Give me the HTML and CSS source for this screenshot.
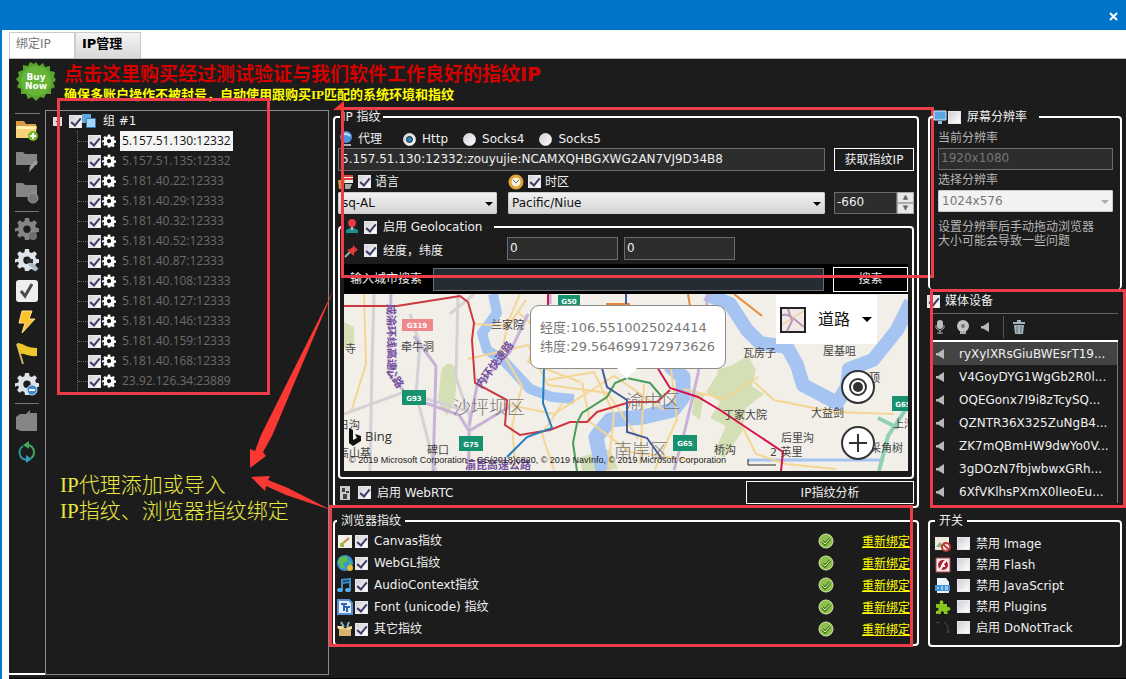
FILE: index.html
```
<!DOCTYPE html>
<html lang="zh-CN">
<head>
    <meta charset="UTF-8">
    <meta name="viewport" content="width=device-width, initial-scale=1.0">
    <title>IP管理</title>
    <link rel="stylesheet" href="styles.css">
</head>
<body>
    <!-- shared icons -->
    <svg class="defs" width="0" height="0">
        <symbol id="gear" viewBox="0 0 24 24">
            <path fill="currentColor" fill-rule="evenodd" d="M10 1h4l.6 3.2 2.2.9L19.500 3.300l2.500 2.500-1.800 2.700.9 2.200 2.900.6v3.500l-3 .6-.9 2.200 1.700 2.600-2.500 2.500-2.600-1.800-2.200.9L14 23h-4l-.6-3.100-2.200-.9-2.600 1.700-2.500-2.500 1.800-2.600-.9-2.200L0 14.800v-3.500l3-.6.9-2.200L2.200 5.800l2.500-2.500 2.600 1.800 2.100-.9zM12 8.500a3.700 3.700 0 1 0 0 7.400 3.700 3.700 0 0 0 0-7.400z"/>
        </symbol>
        <symbol id="ok" viewBox="0 0 16 16">
            <circle cx="8" cy="8" r="7" fill="#8dc04a" stroke="#d5eaa5"/>
            <path d="M4.500 8.500l2.500 2.500 5-5.500" fill="none" stroke="#47771d" stroke-width="3"/>
            <path d="M4.500 8.500l2.500 2.500 5-5.500" fill="none" stroke="#e6f5c2" stroke-width="1"/>
        </symbol>
        <symbol id="speaker" viewBox="0 0 12 12">
            <path fill="#b8b8b8" d="M1 5h2l6-4v10L3 7.500H1z"/>
        </symbol>
    </svg>

    <header class="titlebar">
        <button class="close" aria-label="关闭"><svg width="9" height="9" viewBox="0 0 9 9"><path d="M1 1l7 7M8 1L1 8" stroke="#fff" stroke-width="2"/></svg></button>
    </header>
    <div class="window">
        <nav class="tabs">
            <button class="tab">绑定IP</button>
            <button class="tab active">IP管理</button>
        </nav>

        <main class="content">
            <div class="banner">
                <svg class="buy" width="40" height="40" viewBox="0 0 40 40">
                    <path fill="#57a52c" d="M20 0l3 4 4-3 2 4 5-1 0 5 5 1-1 5 2 3-3 3 2 4-4 2 0 5-5 0-2 4-4-1-4 4-4-4-4 2-2-5-5 0 0-5-4-2 2-4-3-4 3-3-1-4 5-2 0-5 5 1 2-4 4 2z"/>
                    <circle cx="20" cy="19" r="15" fill="#67b436"/>
                    <text x="20" y="18" text-anchor="middle">Buy</text>
                    <text x="20" y="27" text-anchor="middle">Now</text>
                </svg>
                <div class="banner-text">
                    <p class="banner-red">点击这里购买经过测试验证与我们软件工作良好的指纹IP</p>
                    <p class="banner-yellow">确保多账户操作不被封号，自动使用跟购买IP匹配的系统环境和指纹</p>
                </div>
            </div>

            <div class="columns">
                <!-- left toolbar -->
                <aside class="toolbar">
                    <button aria-label="添加组"><svg width="24" height="24" viewBox="0 0 24 24"><path fill="#d99b43" d="M1 3h8l2 3h10v3H1z"/><path fill="#fbd27c" d="M1 8h21l-2 12H1z"/><path fill="#fff1b8" d="M2 8l19 1-1 2H2z"/><circle cx="18" cy="18" r="5" fill="#76b82a"/><path d="M18 15v6M15 18h6" stroke="#fff" stroke-width="2"/></svg></button>
                    <button aria-label="编辑组"><svg width="24" height="24" viewBox="0 0 24 24"><path fill="#858585" d="M1 3h7l2 2h12v11H1z"/><path fill="#9b9b9b" d="M14 23l1-6 6-6 2 2-5 6z"/></svg></button>
                    <button aria-label="删除组"><svg width="24" height="24" viewBox="0 0 24 24"><path fill="#858585" d="M1 3h7l2 2h12v12H1z"/><circle cx="18" cy="18" r="5" fill="#777" stroke="#999"/></svg></button>
                    <hr>
                    <button class="gray" aria-label="添加代理"><svg width="24" height="24"><use href="#gear"/><circle cx="18" cy="19" r="4" fill="#6f6f6f"/></svg></button>
                    <button class="light" aria-label="编辑代理"><svg width="24" height="24"><use href="#gear"/><path d="M14 14l8 8" stroke="#a9bbcb" stroke-width="4"/><path d="M11 11h7v4h-6z" fill="#303030"/></svg></button>
                    <button aria-label="全选"><svg width="24" height="24" viewBox="0 0 24 24"><rect x="1" y="1" width="22" height="22" rx="3" fill="#eee"/><path d="M6 12l4 5 7-12" fill="none" stroke="#4b4b4b" stroke-width="3"/></svg></button>
                    <button aria-label="测试"><svg width="24" height="24" viewBox="0 0 24 24"><path fill="#ffc22e" stroke="#ffe38b" d="M7 1h10l-3 8h6L7 23l3-10H4z"/></svg></button>
                    <button aria-label="标记"><svg width="24" height="24" viewBox="0 0 24 24"><path stroke="#c9b062" stroke-width="2" d="M2 3l6 20"/><path fill="#edc62a" d="M2 2c6 0 9 5 20 5v8c-9 1-12-3-17-2z"/></svg></button>
                    <button class="light" aria-label="删除代理"><svg width="24" height="24"><use href="#gear"/><circle cx="17" cy="18" r="5" fill="#4287cf" stroke="#b8dbff"/><path d="M14 18h6" stroke="#fff" stroke-width="2"/></svg></button>
                    <hr>
                    <button aria-label="导入"><svg width="24" height="24" viewBox="0 0 24 24"><path fill="#858585" d="M1 8l4-3h6l4-4v3h7v18H6l-5-2z"/></svg></button>
                    <button aria-label="刷新"><svg width="24" height="24" viewBox="0 0 24 24"><path d="M5 15a8 8 0 0 1 3-9" fill="none" stroke="#1f978f" stroke-width="2"/><path d="M12 5c4 0 7 3 7 7M19 12c0 3-1 5-3 6" fill="none" stroke="#42a85d" stroke-width="2"/><path d="M13 20c-4 0-7-2-8-5" fill="none" stroke="#2c9cba" stroke-width="2"/><path fill="#42a85d" d="M8 5l6-4v8z"/><path fill="#2c9cba" d="M17 19l-6-4v8z"/></svg></button>
                </aside>

                <!-- proxy tree -->
                <section class="tree-panel">
                    <div class="tree-root">
                        <button class="expander" aria-label="折叠">-</button>
                        <input type="checkbox" id="group1" checked>
                        <svg width="14" height="14" viewBox="0 0 14 14"><path fill="#63a7dd" d="M0 0h9v9H0z"/><path fill="#a5d6f5" stroke="#3779b2" d="M4.500 4.500h9v9h-9z"/></svg>
                        <label for="group1">组 #1</label>
                    </div>
                    <ul class="tree">
                        <li><input type="checkbox" id="p1" checked><svg width="14" height="14"><use href="#gear"/></svg><label class="selected" for="p1">5.157.51.130:12332</label></li>
                        <li><input type="checkbox" id="p2" checked><svg width="14" height="14"><use href="#gear"/></svg><label for="p2">5.157.51.135:12332</label></li>
                        <li><input type="checkbox" id="p3" checked><svg width="14" height="14"><use href="#gear"/></svg><label for="p3">5.181.40.22:12333</label></li>
                        <li><input type="checkbox" id="p4" checked><svg width="14" height="14"><use href="#gear"/></svg><label for="p4">5.181.40.29:12333</label></li>
                        <li><input type="checkbox" id="p5" checked><svg width="14" height="14"><use href="#gear"/></svg><label for="p5">5.181.40.32:12333</label></li>
                        <li><input type="checkbox" id="p6" checked><svg width="14" height="14"><use href="#gear"/></svg><label for="p6">5.181.40.52:12333</label></li>
                        <li><input type="checkbox" id="p7" checked><svg width="14" height="14"><use href="#gear"/></svg><label for="p7">5.181.40.87:12333</label></li>
                        <li><input type="checkbox" id="p8" checked><svg width="14" height="14"><use href="#gear"/></svg><label for="p8">5.181.40.108:12333</label></li>
                        <li><input type="checkbox" id="p9" checked><svg width="14" height="14"><use href="#gear"/></svg><label for="p9">5.181.40.127:12333</label></li>
                        <li><input type="checkbox" id="p10" checked><svg width="14" height="14"><use href="#gear"/></svg><label for="p10">5.181.40.146:12333</label></li>
                        <li><input type="checkbox" id="p11" checked><svg width="14" height="14"><use href="#gear"/></svg><label for="p11">5.181.40.159:12333</label></li>
                        <li><input type="checkbox" id="p12" checked><svg width="14" height="14"><use href="#gear"/></svg><label for="p12">5.181.40.168:12333</label></li>
                        <li><input type="checkbox" id="p13" checked><svg width="14" height="14"><use href="#gear"/></svg><label for="p13">23.92.126.34:23889</label></li>
                    </ul>
                    <p class="note">IP代理添加或导入<br>IP指纹、浏览器指纹绑定</p>
                    <div class="mark mark-tree"></div>
                    <svg class="arrows" width="300" height="420" viewBox="0 0 300 420">
                        <path fill="#fa3833" d="M288 178L226 325l-9 16 3 4-16 12 0-19 5 2 6-16z"/>
                        <path fill="#fa3833" d="M285 399L240 384l-20-9-1 5-14-14 19-1-2 4 20 8z"/>
                    </svg>
                </section>

                <!-- fingerprint settings -->
                <div class="middle">
                    <fieldset class="group ip-group">
                        <legend>IP 指纹</legend>
                        <div class="proxy-row">
                            <svg width="16" height="16" viewBox="0 0 16 16"><circle cx="8" cy="6" r="6" fill="#4c92dc"/><path d="M4 5c2-3 5-3 8 0" fill="none" stroke="#bfe0ff" stroke-width="2"/><path fill="#aaa" d="M3 13h10v2H3z"/></svg>
                            <span class="proxy-label">代理</span>
                            <label><input type="radio" name="proxy" checked>Http</label>
                            <label><input type="radio" name="proxy">Socks4</label>
                            <label><input type="radio" name="proxy">Socks5</label>
                        </div>
                        <div class="ip-grid">
                            <input class="field wide" type="text" aria-label="代理" value="5.157.51.130:12332:zouyujie:NCAMXQHBGXWG2AN7VJ9D34B8">
                            <button class="btn">获取指纹IP</button>
                            <div class="head">
                                <svg width="16" height="16" viewBox="0 0 16 16"><path fill="#eee" d="M4 1h11v8H4z"/><path d="M5 2h10M5 5h10" stroke="#df4438" stroke-width="2"/><path fill="#d69634" d="M0 6h7l-2 9H1z"/><path fill="#aaa" d="M7 10h7l-2 5H7z"/></svg>
                                <input type="checkbox" id="lang" checked><label for="lang">语言</label>
                            </div>
                            <div class="head">
                                <svg width="16" height="16" viewBox="0 0 16 16"><circle cx="8" cy="8" r="6" fill="#f6f1df" stroke="#e4a339" stroke-width="3"/><path d="M5 6l3 3 3-3" fill="none" stroke="#6b6b6b"/></svg>
                                <input type="checkbox" id="zone" checked><label for="zone">时区</label>
                            </div>
                            <span></span>
                            <div class="select"><select aria-label="语言"><option>sq-AL</option></select></div>
                            <div class="select"><select aria-label="时区"><option>Pacific/Niue</option></select></div>
                            <div class="spin">
                                <input class="field" type="text" aria-label="时差" value="-660">
                                <div class="spin-buttons"><button aria-label="增加">▲</button><button aria-label="减少">▼</button></div>
                            </div>
                        </div>

                        <fieldset class="group geo-group">
                            <legend>
                                <svg width="16" height="16" viewBox="0 0 16 16"><path fill="#1b8d91" d="M2 11l6-3 6 3v3H2z"/><path fill="#bbb" d="M7 5h2v6H7z"/><circle cx="8" cy="4" r="4" fill="#e73944"/></svg>
                                <input type="checkbox" id="geo" checked><label for="geo">启用 Geolocation</label>
                            </legend>
                            <div class="latlng">
                                <div class="head">
                                    <svg width="16" height="16" viewBox="0 0 16 16"><path d="M1 14l6-6" stroke="#aaa" stroke-width="2"/><path fill="#df3b3d" d="M9 2l5 5-2 1-2 2v3L3 7l3-1 3-2z"/></svg>
                                    <input type="checkbox" id="coords" checked><label for="coords">经度，纬度</label>
                                </div>
                                <input class="field" type="text" aria-label="经度" value="0">
                                <input class="field" type="text" aria-label="纬度" value="0">
                            </div>
                            <div class="search">
                                <label for="city">输入城市搜索</label>
                                <input class="field" type="text" id="city">
                                <button class="btn">搜索</button>
                            </div>
                            <div class="map">
                                <svg class="map-art" viewBox="0 0 564 177" preserveAspectRatio="xMidYMid slice">
                                    <path fill="#f2efe9" d="M0 0h564v177H0z"/>
                                    <g fill="#d4dfb5">
                                        <path d="M97 78c4-12 14-10 16 0l-2 28-8 16-9-14zM0 28l10 5v18l-10 3zM390 70l14-8 8 14-4 16 12 8-18 14-4 24-18 26-10-6 12-26-16-8 10-16-14-10 10-16z"/>
                                        <path d="M360 100l-4 26-8-6 2-22zM374 75l16-4-6 22-12-4zM236 163l30-8 8 20-36 2z"/>
                                    </g>
                                    <!-- rivers -->
                                    <g fill="none" stroke="#a5c4f2" stroke-linejoin="round">
                                        <path stroke-width="10" d="M149 0l4 19-15 20 5 17 16 10 27 29 22 8 22 2"/>
                                        <path stroke-width="15" d="M259 177l-7-34 14-17 33-3 30-7 10-13 0-20-14-12"/>
                                        <path stroke-width="14" d="M362 0l24 10 17 26 13 13 27 4 10 18 6 20 34 18 10-16 2-18 24-9 24-30 14-28"/>
                                        <path stroke-width="3" d="M404 166h136"/>
                                    </g>
                                    <!-- minor roads -->
                                    <g fill="none" stroke="#f5d594" stroke-width="2">
                                        <path d="M20 0l2 70-15 48M176 0l-12 28-6 30 20 34-10 40 4 45M130 30l34 2 18-26M124 65l60-14 20 40 60 8 30 46M204 86l46-8 20 42-6 57M160 110l50 10 60-38 50 34M300 90l-4 80M327 75l6 50-22 50M340 95l40 10 34-22M410 88l20 18 60 12 60 2M218 110l-20 30 12 36M392 120l20 40 30 10 50 5M174 18l22 20-12 30 52 20M238 88l8 40 40 30 60 8"/>
                                    </g>
                                    <g fill="none" stroke="#d5d2d6" stroke-width="3">
                                        <path d="M30 0l-2 70-2 107M0 120l60-22 66 20M114 0l-2 84 14 40-2 53M66 20l10 30-4 50 20 77M106 20l24-20"/>
                                    </g>
                                    <g fill="none" stroke="#c8b2d8" stroke-width="3">
                                        <path d="M47 0l-2 80 20 23 50 18 10 16 0 40M184 20l-18 38-33 34-8 40M70 42l22 30-3 105M206 0l0 10M364 0l-10 80-14 60-10 36M125 137l40-24"/>
                                    </g>
                                    <g fill="none" stroke="#e78a3d" stroke-width="2"><path d="M344 0l3 18 26 10M262 10h24M390 0l28 22"/></g>
                                    <g fill="none" stroke="#8fd0b6" stroke-width="4"><path d="M564 112l-20 30-9 35M534 124l20 10"/></g>
                                    <!-- metro lines -->
                                    <g fill="none" stroke-width="2">
                                        <path stroke="#cb3840" d="M0 12h53l63-10 8 6 6 21-2 17 3 43 32 17-2 25 15 10 30-5 20-8h17l10-10 33-10h27l13-12"/>
                                        <path stroke="#d5144d" d="M204 0v12M313 73l13 21 28 9 22 13 63 42-2 19"/>
                                        <path stroke="#247fc0" d="M200 74l-1 35 9 25-25 9-20 20"/>
                                        <path stroke="#4b9c59" d="M233 177l-4-28 4-20 5-10 25-16 8-14 12-5 23 5 12 14"/>
                                        <path stroke="#465d97" d="M258 74l5 19 20 13v32l20 6 15 21M282 0v10"/>
                                    </g>
                                    <path id="ring-w" fill="none" d="M43 10L44 80L60 105"/>
                                    <path id="ring-in" fill="none" d="M137 95L172 48"/>
                                    <g class="purple">
                                        <text><textPath href="#ring-w">成渝环线高速公路</textPath></text>
                                        <text><textPath href="#ring-in">内环快速路</textPath></text>
                                        <text x="121" y="175">渝昆高速公路</text>
                                    </g>
                                    <g class="district"><text x="109" y="120">沙坪坝区</text><text x="282" y="114">渝中区</text><text x="270" y="163">南岸区</text></g>
                                    <g class="place">
                                        <text x="57" y="57">牵牛洞</text><text x="147" y="35">兰家院</text><text x="1" y="59">寺</text><text x="-6" y="135">日沟</text><text x="83" y="160">碑口</text><text x="-6" y="163">高山基</text>
                                        <text x="399" y="63">瓦房子</text><text x="479" y="61">屋基咀</text><text x="379" y="125">丁家大院</text><text x="467" y="123">大益剑</text><text x="437" y="148">后里沟</text><text x="370" y="160">桥沟</text><text x="526" y="158">采角树</text><text x="549" y="134">上湾</text><text x="525" y="88">顶</text><text x="426" y="162">2 英里</text>
                                    </g>
                                    <path fill="#ee888b" d="M58 25h31v12H58z"/>
                                    <path fill="#16936e" d="M58 96h24v15H58zM115 142h24v15h-24zM214 1h22v11h-22zM329 141h24v16h-24zM548 102h22v15h-22z"/>
                                    <g class="badge"><text x="73" y="34">G319</text><text x="70" y="107">G93</text><text x="127" y="153">G75</text><text x="225" y="10">G50</text><text x="341" y="152">G65</text><text x="559" y="113">G65</text></g>
                                    <path d="M404 165v6h28" stroke="#222" fill="none"/>
                                    <path fill="#111" d="M5 134l4 2v10l4-2-2-4 6 2v5l-8 5-4-3z"/>
                                    <text class="bing" x="21" y="147">Bing</text>
                                    <text class="copy" x="5" y="169">© 2019 Microsoft Corporation – GS(2018)6820, © 2019 NavInfo, © 2019 Microsoft Corporation</text>
                                </svg>
                                <div class="popup">经度:106.5510025024414<br>纬度:29.564699172973626</div>
                                <button class="map-type">
                                    <svg width="26" height="26" viewBox="0 0 26 26"><path fill="#f2e9e4" stroke="#222" stroke-width="2" d="M1 1h24v24H1z"/><path d="M2 8c8-2 12 5 22 12M8 2l4 12-5 10" fill="none" stroke="#b994bd" stroke-width="2"/><path d="M2 18l12-8 10-6" fill="none" stroke="#eac477"/></svg>
                                    道路
                                    <svg width="10" height="5" viewBox="0 0 10 5"><path d="M0 0h10L5 5z"/></svg>
                                </button>
                                <div class="map-buttons">
                                    <button aria-label="定位"><svg width="34" height="34" viewBox="0 0 34 34"><circle cx="17" cy="17" r="16" fill="#fff" stroke="#333" stroke-width="2"/><circle cx="17" cy="17" r="8" fill="none" stroke="#333" stroke-width="2"/><circle cx="17" cy="17" r="5" fill="#333"/></svg></button>
                                    <button aria-label="放大"><svg width="34" height="34" viewBox="0 0 34 34"><circle cx="17" cy="17" r="16" fill="#fff" stroke="#333" stroke-width="2"/><path d="M17 8v18M8 17h18" stroke="#333" stroke-width="2"/></svg></button>
                                </div>
                            </div>
                        </fieldset>

                        <div class="webrtc">
                            <svg width="16" height="16" viewBox="0 0 16 16"><path fill="#ccc" d="M2 1h10v14H2z"/><path fill="#444" d="M4 3h3v4H4zM8 6h3v2H8zM5 9h4v5H5z"/></svg>
                            <input type="checkbox" id="rtc" checked><label for="rtc">启用 WebRTC</label>
                            <button class="btn">IP指纹分析</button>
                        </div>
                        <div class="mark mark-ip"></div>
                    </fieldset>

                    <fieldset class="group browser-group">
                        <legend>浏览器指纹</legend>
                        <div class="print-row">
                            <svg width="16" height="16" viewBox="0 0 16 16"><path fill="#f3f1e7" d="M1 2h14v13H1z"/><path d="M4 12l8-7" stroke="#c58d35" stroke-width="2"/><path fill="#8fc04a" d="M3 10h4v4H3z"/></svg>
                            <input type="checkbox" id="fp1" checked><label for="fp1">Canvas指纹</label><svg width="16" height="16"><use href="#ok"/></svg><a href="#">重新绑定</a>
                        </div>
                        <div class="print-row">
                            <svg width="16" height="16" viewBox="0 0 16 16"><circle cx="8" cy="8" r="8" fill="#338fd8"/><path fill="#59bd52" d="M3 2l7-1 1 5-5 3 3 5-5-1-3-6zM12 5l3 4-3 4z"/><circle cx="13" cy="13" r="3" fill="#ebbb39"/></svg>
                            <input type="checkbox" id="fp2" checked><label for="fp2">WebGL指纹</label><svg width="16" height="16"><use href="#ok"/></svg><a href="#">重新绑定</a>
                        </div>
                        <div class="print-row">
                            <svg width="16" height="16" viewBox="0 0 16 16"><path d="M5 13V3l8-1v10M5 6l8-1" fill="none" stroke="#3c8cc7" stroke-width="2"/><ellipse cx="3" cy="13" rx="3" ry="2" fill="#54ace8"/><ellipse cx="11" cy="13" rx="3" ry="2" fill="#54ace8"/></svg>
                            <input type="checkbox" id="fp3" checked><label for="fp3">AudioContext指纹</label><svg width="16" height="16"><use href="#ok"/></svg><a href="#">重新绑定</a>
                        </div>
                        <div class="print-row">
                            <svg width="16" height="16" viewBox="0 0 16 16"><path fill="#e7effb" stroke="#5b8fd5" stroke-width="2" d="M1 1h11l3 3v11H1z"/><path d="M4 5h6M7 5v7M8 8h5M10 8v5" fill="none" stroke="#2963b6" stroke-width="2"/></svg>
                            <input type="checkbox" id="fp4" checked><label for="fp4">Font (unicode) 指纹</label><svg width="16" height="16"><use href="#ok"/></svg><a href="#">重新绑定</a>
                        </div>
                        <div class="print-row">
                            <svg width="16" height="16" viewBox="0 0 16 16"><path fill="#d9b36c" d="M2 7h12v8H2z"/><path fill="#f1d798" d="M0 5h6l2 3H1zM15 5l-5 1-1 3 6-1z"/><path d="M4 1l3 5M12 1l-2 5" stroke="#8db4c5" stroke-width="2"/></svg>
                            <input type="checkbox" id="fp5" checked><label for="fp5">其它指纹</label><svg width="16" height="16"><use href="#ok"/></svg><a href="#">重新绑定</a>
                        </div>
                        <div class="mark mark-browser"></div>
                    </fieldset>
                </div>

                <!-- right column -->
                <div class="right">
                    <fieldset class="group screen-group">
                        <legend>
                            <svg width="14" height="14" viewBox="0 0 14 14"><path fill="#5aa7e4" stroke="#d8e9f6" d="M1 1h12v9H1z"/><path fill="#7fc0ee" d="M5 11h4v3H5z"/></svg>
                            <input type="checkbox" id="screen"><label for="screen">屏幕分辨率</label>
                        </legend>
                        <label class="caption" for="current">当前分辨率</label>
                        <input class="field" type="text" id="current" value="1920x1080" disabled>
                        <label class="caption" for="choose">选择分辨率</label>
                        <div class="select off"><select id="choose" disabled><option>1024x576</option></select></div>
                        <p class="hint">设置分辨率后手动拖动浏览器大小可能会导致一些问题</p>
                    </fieldset>

                    <section class="media">
                        <div class="media-head"><input type="checkbox" id="media" checked><label for="media">媒体设备</label></div>
                        <div class="media-tools">
                            <button aria-label="麦克风"><svg width="12" height="14" viewBox="0 0 12 14"><rect x="3" y="0" width="6" height="9" rx="3" fill="#bbb"/><path d="M2 5v3l4 3 4-3V5M6 10v4M3 13h6" fill="none" stroke="#aaa"/></svg></button>
                            <button aria-label="摄像头"><svg width="12" height="14" viewBox="0 0 12 14"><circle cx="6" cy="6" r="6" fill="#c3c3c3"/><circle cx="6" cy="6" r="2" fill="#777"/><path fill="#aaa" d="M3 11h6v3H3z"/></svg></button>
                            <button aria-label="扬声器"><svg width="12" height="12"><use href="#speaker"/></svg></button>
                            <button class="trash" aria-label="删除"><svg width="12" height="14" viewBox="0 0 12 14"><path fill="#a4b2bd" d="M0 2h4V0h4v2h4v2H0zM1 5h10l-1 9H2z"/><path d="M4 6v7M8 6v7" stroke="#5d6b75"/></svg></button>
                        </div>
                        <ul class="devices">
                            <li class="current"><svg width="12" height="12"><use href="#speaker"/></svg>ryXyIXRsGiuBWEsrT19...</li>
                            <li><svg width="12" height="12"><use href="#speaker"/></svg>V4GoyDYG1WgGb2R0l...</li>
                            <li><svg width="12" height="12"><use href="#speaker"/></svg>OQEGonx7I9i8zTcySQ...</li>
                            <li><svg width="12" height="12"><use href="#speaker"/></svg>QZNTR36X325ZuNgB4...</li>
                            <li><svg width="12" height="12"><use href="#speaker"/></svg>ZK7mQBmHW9dwYo0V...</li>
                            <li><svg width="12" height="12"><use href="#speaker"/></svg>3gDOzN7fbjwbwxGRh...</li>
                            <li><svg width="12" height="12"><use href="#speaker"/></svg>6XfVKlhsPXmX0lIeoEu...</li>
                        </ul>
                        <div class="mark mark-media"></div>
                    </section>

                    <fieldset class="group switch-group">
                        <legend>开关</legend>
                        <div class="switch-row">
                            <svg width="16" height="16" viewBox="0 0 16 16"><path fill="#ece9df" d="M0 1h14v13H0z"/><path fill="#8eae85" d="M1 11l4-5 4 5z"/><circle cx="11" cy="11" r="4" fill="#eee" stroke="#c13a32" stroke-width="2"/><path d="M8 8l6 6" stroke="#c13a32" stroke-width="2"/></svg>
                            <input type="checkbox" id="s1"><label for="s1">禁用 Image</label>
                        </div>
                        <div class="switch-row">
                            <svg width="16" height="16" viewBox="0 0 16 16"><path fill="#f2e9e9" stroke="#b93b47" d="M1 1h14v14H1z"/><circle cx="8" cy="8" r="5" fill="#b41e32"/><path d="M5 12c3-1 2-7 6-8M6 9h4" fill="none" stroke="#fff" stroke-width="2"/></svg>
                            <input type="checkbox" id="s2"><label for="s2">禁用 Flash</label>
                        </div>
                        <div class="switch-row">
                            <svg width="16" height="16" viewBox="0 0 16 16"><path fill="#eaf3fb" d="M2 0h9l3 4v11H2z"/><path fill="#3d91d8" d="M0 7h15v6H0z"/><path d="M3 9v2M6 9h2M6 11h2M10 9h3M10 11h3" stroke="#fff"/></svg>
                            <input type="checkbox" id="s3"><label for="s3">禁用 JavaScript</label>
                        </div>
                        <div class="switch-row">
                            <svg width="16" height="16" viewBox="0 0 16 16"><path fill="#89c51e" d="M1 5h4c-2-5 5-5 3 0h4v3c5-1 4 5 0 4l1 3H9c0-4-4-3-3 0H1v-3c4 0 3-4 0-3z"/></svg>
                            <input type="checkbox" id="s4"><label for="s4">禁用 Plugins</label>
                        </div>
                        <div class="switch-row">
                            <svg width="16" height="16" viewBox="0 0 16 16"><path d="M1 2l4 1M9 2l4 4v7M12 12h3" fill="none" stroke="#3c5250"/></svg>
                            <input type="checkbox" id="s5"><label for="s5">启用 DoNotTrack</label>
                        </div>
                    </fieldset>
                </div>
            </div>
        </main>
    </div>
</body>
</html>
```
FILE: styles.css
```
* {
    box-sizing: border-box;
}
body {
    margin: 0;
    min-height: 100vh;
    display: flex;
    flex-direction: column;
    background-color: #fff;
    color: #f0f0f0;
    font-family: "DejaVu Sans", "Noto Sans CJK SC", sans-serif;
    font-size: 12px;
    line-height: 16px;
}
p, ul {
    margin: 0;
    padding: 0;
    list-style: none;
}
svg {
    display: block;
    flex: none;
}
.defs {
    position: absolute;
}
button {
    font: inherit;
    color: inherit;
    background: none;
    border: 0;
    padding: 0;
}

/* window frame */
.titlebar {
    height: 30px;
    background-color: #0074c8;
    display: flex;
    justify-content: flex-end;
    align-items: center;
    padding: 2px 8px 0;
}
.window {
    flex: 1;
    display: flex;
    flex-direction: column;
    border-left: 2px solid #0074c8;
    padding-left: 7px;
}
.tabs {
    display: flex;
    height: 29px;
    border-bottom: 1px solid #bbb;
}
.tab {
    width: 66px;
    margin-top: 2px;
    padding: 0 0 3px 6px;
    border: 1px solid #ccc;
    border-bottom: 0;
    color: #777;
    text-align: left;
}
.tab.active {
    background: linear-gradient(#f4f4f4, #d8d8d8);
    color: #000;
    font-size: 13px;
    font-weight: bold;
}

.content {
    flex: 1;
    display: flex;
    flex-direction: column;
    background-color: #1c1c1c;
    border-bottom: 1px solid #000;
}
.banner {
    display: flex;
    height: 50px;
    padding: 3px 7px;
    gap: 8px;
}
.buy text {
    fill: #fff;
    font-size: 9px;
    font-weight: bold;
}
.banner-red {
    color: #d40000;
    font-size: 19px;
    font-weight: bold;
    line-height: 24px;
}
.banner-yellow {
    color: #ff0;
    font-size: 13px;
    font-weight: bold;
    line-height: 18px;
    font-family: "Liberation Serif", "Noto Sans CJK SC", serif;
}

.columns {
    flex: 1;
    display: flex;
    padding-right: 4px;
}

/* left toolbar */
.toolbar {
    width: 36px;
    margin-bottom: 3px;
    padding: 0 5px 0 6px;
    border-bottom: 2px solid #fff;
    display: flex;
    flex-direction: column;
    gap: 7px;
}
.toolbar hr {
    width: 24px;
    margin: 0 0 -2px;
    border: 0;
    border-top: 1px solid #777;
}
.toolbar::before {
    content: "";
    margin-top: 4px;
    border-top: 1px solid #777;
    margin-bottom: -3px;
}
.gray { color: #858585; }
.light { color: #dfe4ea; }

/* tree */
.tree-panel {
    position: relative;
    width: 284px;
    margin: 1px 0 3px;
    border: 1px solid #8b8b8b;
}
.tree-root, .tree li {
    display: flex;
    align-items: center;
    height: 20px;
}
.tree-root {
    padding-left: 7px;
}
.expander {
    width: 9px;
    height: 9px;
    margin-right: 7px;
    background-color: #ddd;
    color: #222;
    line-height: 6px;
}
.tree-root label {
    margin-left: 7px;
}
.tree {
    margin-left: 31px;
    border-left: 1px dotted #666;
    font-family: "Open Sans", sans-serif;
    color: #6c6c6c;
}
.tree li::before {
    content: "";
    width: 10px;
    border-top: 1px dotted #666;
}
.tree svg {
    margin-left: 1px;
    color: #fff;
}
.tree label {
    margin-left: 4px;
    padding: 0 2px;
    line-height: 20px;
}
.tree .selected {
    background-color: #f4f4f4;
    color: #111;
}
.note {
    margin: 81px 0 0 14px;
    color: #e8e840;
    font-family: "Liberation Serif", "Noto Sans CJK SC", serif;
    font-size: 21px;
    font-weight: 300;
    line-height: 26px;
}

/* checkboxes and radios */
input[type="checkbox"], input[type="radio"] {
    appearance: none;
    position: relative;
    flex: none;
    width: 13px;
    height: 13px;
    margin: 0;
    background: linear-gradient(135deg, #cfcfd6, #fff);
    border: 1px solid #e8e8ee;
}
input[type="checkbox"]:checked::after {
    content: "";
    position: absolute;
    left: 3px;
    top: 0;
    width: 4px;
    height: 8px;
    border: solid #3c3c66;
    border-width: 0 2px 2px 0;
    transform: rotate(40deg);
}
input[type="radio"] {
    border-radius: 50%;
}
input[type="radio"]:checked::after {
    content: "";
    position: absolute;
    inset: 2px;
    border-radius: 50%;
    border: 1px solid #222;
    background-color: #2388bd;
}

/* group boxes */
.group {
    position: relative;
    min-width: 0;
    margin: 0;
    padding: 0 3px;
    border: 2px solid #fff;
    border-radius: 4px;
}
.group legend {
    padding: 0 4px;
}
.field {
    width: 100%;
    min-width: 0;
    height: 23px;
    padding: 0 2px 2px;
    background-color: #2d2d2d;
    border: 1px solid #6c6c6c;
    color: #f0f0f0;
    font: inherit;
}
.btn {
    height: 23px;
    border: 1px solid #fff;
    text-align: center;
}
.select {
    position: relative;
}
.select::after {
    content: "";
    position: absolute;
    right: 4px;
    top: 10px;
    border: solid transparent;
    border-width: 4px 4px 0;
    border-top-color: #000;
}
.select select {
    appearance: none;
    width: 100%;
    height: 22px;
    padding: 0 3px;
    border: 1px solid #ccc;
    border-radius: 1px;
    background: linear-gradient(#f2f2f2, #d4d4d4);
    color: #111;
    font: inherit;
}
.select.off select {
    background: #f2f2f2;
    color: #777;
    opacity: 1;
}
.select.off::after {
    border-top-color: #aaa;
}

.middle {
    flex: 1;
    min-width: 0;
    margin-left: 4px;
    display: flex;
    flex-direction: column;
    gap: 5px;
}
.ip-group {
    padding-bottom: 2px;
}
.proxy-row {
    display: flex;
    align-items: center;
    height: 23px;
    padding-top: 5px;
}
.proxy-label {
    width: 49px;
    padding-left: 4px;
}
.proxy-row label {
    display: flex;
    align-items: center;
    gap: 6px;
    margin-right: 15px;
}
.ip-grid {
    display: grid;
    grid-template-columns: 159px 1fr 80px;
    column-gap: 9px;
    grid-template-rows: 23px 21px 22px;
}
.ip-grid > div:nth-of-type(even) {
    margin-left: 2px;
}
.wide {
    grid-column: span 2;
}
.head {
    display: flex;
    align-items: center;
    gap: 4px;
}
.spin {
    display: flex;
    height: 22px;
}
.spin .field {
    height: 22px;
}
.spin-buttons {
    width: 17px;
    flex: none;
    display: flex;
    flex-direction: column;
    background-color: #e8e8e8;
    color: #666;
}
.spin-buttons button {
    height: 11px;
    border: 1px solid #aaa;
    font-size: 7px;
    line-height: 9px;
}

.geo-group {
    margin-top: 3px;
    padding: 0 4px 6px;
}
.geo-group legend {
    display: flex;
    align-items: center;
    gap: 4px;
    height: 20px;
    padding: 0 12px 0 0;
}
.geo-group legend label, .latlng label {
    margin-left: 2px;
}
.latlng {
    display: flex;
    gap: 6px;
    height: 27px;
}
.latlng .head {
    width: 157px;
}
.latlng .field {
    width: 111px;
}
.search {
    display: flex;
    align-items: center;
    height: 30px;
    padding: 0 0 0 6px;
    background-color: #000;
}
.search label {
    width: 83px;
}
.search .field {
    flex: 1;
    background-color: #262c33;
}
.search .btn {
    width: 75px;
    height: 25px;
    margin-left: 9px;
}

/* map */
.map {
    position: relative;
    height: 177px;
    color: #333;
}
.map-art {
    width: 100%;
    height: 100%;
}
.place {
    fill: #444;
    font-size: 11px;
}
.district {
    fill: #777;
    font-size: 18px;
    font-weight: 300;
}
.purple {
    fill: #7451a0;
    font-size: 11px;
    font-weight: bold;
}
.badge {
    fill: #fff;
    font-size: 7px;
    font-weight: bold;
    text-anchor: middle;
}
.bing {
    fill: #333;
    font: 13px "Open Sans", sans-serif;
}
.copy {
    fill: #222;
    font: 9px "Liberation Sans", sans-serif;
}
.popup {
    position: absolute;
    left: 186px;
    top: 11px;
    width: 196px;
    height: 64px;
    padding: 12px 9px;
    background-color: #fff;
    border: 1px solid #8c8c8c;
    border-radius: 9px;
    color: #777;
    font-size: 13px;
    line-height: 19px;
}
.popup::after {
    content: "";
    position: absolute;
    left: 86px;
    top: 62px;
    border: solid transparent;
    border-width: 11px 10px 0;
    border-top-color: #fff;
}
.map-type {
    position: absolute;
    top: 1px;
    right: 31px;
    height: 49px;
    padding: 0 5px 0 4px;
    display: flex;
    align-items: center;
    gap: 12px;
    background-color: #fff;
    color: #111;
    font-size: 16px;
}
.map-buttons {
    position: absolute;
    top: 76px;
    right: 33px;
    display: flex;
    flex-direction: column;
    gap: 22px;
}
.webrtc {
    display: flex;
    align-items: center;
    gap: 6px;
    margin-top: 2px;
}
.webrtc svg {
    margin-right: -2px;
}
.webrtc .btn {
    width: 168px;
    margin-left: auto;
}

.browser-group {
    padding: 0 0 4px;
}
.print-row {
    display: flex;
    align-items: center;
    height: 22px;
    padding-left: 2px;
}
.browser-group legend + .print-row {
    margin-top: 1px;
}
.browser-group legend {
    margin-left: 2px;
}
.ip-group > legend {
    padding: 0 2px;
    margin-left: 2px;
}
.print-row input {
    margin: 0 6px 0 2px;
}
.print-row label {
    flex: 1;
}
.print-row a {
    margin: 2px 7px 0 28px;
    color: #ff0;
}

/* right column */
.right {
    width: 194px;
    margin-left: 9px;
}
.screen-group {
    height: 180px;
    padding: 3px 7px 0 8px;
    border-bottom: 0;
    color: #b5b5b5;
}
.screen-group legend {
    display: flex;
    align-items: center;
    gap: 1px;
    margin-left: -5px;
    padding: 0 12px 0 0;
    color: #f0f0f0;
}
.screen-group legend label {
    margin-left: 5px;
}
.screen-group .field {
    height: 22px;
    color: #777;
}
.caption {
    display: block;
    padding: 2px 0;
}
.screen-group .hint {
    width: 160px;
    margin-top: 8px;
    line-height: 14px;
}
.media {
    position: relative;
    height: 219px;
    padding: 0 4px 0 3px;
}
.media-head {
    display: flex;
    align-items: center;
    gap: 5px;
    height: 24px;
    margin: 0 -4px 0 -4px;
    padding-right: 4px;
}
.media-tools {
    display: flex;
    align-items: center;
    gap: 11px;
    height: 29px;
    padding-left: 3px;
    border-top: 1px solid #666;
    border-bottom: 2px solid #fff;
}
.trash {
    padding: 4px 0 4px 9px;
    border-left: 1px solid #555;
}
.devices {
    border-right: 1px solid #777;
}
.devices li {
    display: flex;
    align-items: center;
    gap: 12px;
    height: 23px;
    padding-left: 4px;
    overflow: hidden;
    white-space: nowrap;
}
.devices .current {
    background-color: #444;
}
.switch-group {
    margin-top: 5px;
    padding: 4px 5px 7px;
}
.switch-row {
    display: flex;
    align-items: center;
    gap: 6px;
    height: 21px;
}

/* red highlights drawn over the panels */
.mark {
    position: absolute;
    border: 3px solid #ee3d4a;
    pointer-events: none;
}
.mark-tree {
    left: 11px;
    top: -13px;
    width: 213px;
    height: 297px;
}
.mark-ip {
    left: 6px;
    top: -18px;
    right: -17px;
    height: 171px;
}
.mark-ip::before {
    content: "";
    position: absolute;
    left: -11px;
    top: -9px;
    border: solid transparent;
    border-width: 0 0 9px 11px;
    border-bottom-color: #fa3833;
}
.mark-media {
    left: 2px;
    top: 0;
    right: -4px;
    bottom: 0;
}
.mark-browser {
    left: -6px;
    top: -24px;
    right: 4px;
    bottom: -3px;
}
.arrows {
    position: absolute;
    left: 0;
    top: 0;
    pointer-events: none;
}
```
